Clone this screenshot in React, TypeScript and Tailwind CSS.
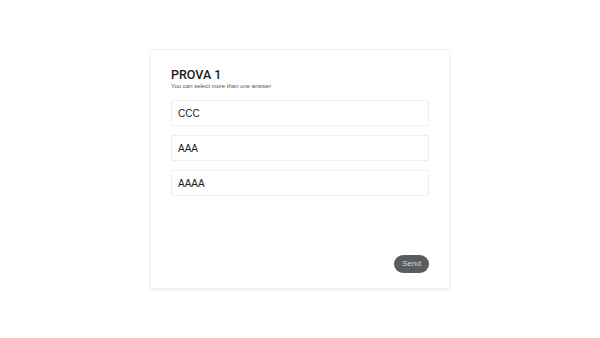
export default function App() {
  const options = ['CCC', 'AAA', 'AAAA'];
  return (
    <div className="flex h-[338px] w-full items-center justify-center bg-white font-['Liberation_Sans',Arial,sans-serif]">
      <div className="flex h-[240px] w-[300px] flex-col rounded-[3px] border border-[#f0f0f0] bg-white px-[20px] pb-[15px] pt-[17px] shadow-[0_1px_3px_rgba(0,0,0,0.08)]">
        <h1 className="font-['Roboto',sans-serif] text-[12.5px] font-medium leading-[15px] text-[#1a1a1a]">PROVA 1</h1>
        <p className="text-[6px] leading-[8px] text-[#555]">You can select more than one answer</p>
        <div className="mt-[10px] flex flex-col gap-[9px]">
          {options.map((o) => (
            <div
              key={o}
              className="flex h-[26px] items-center rounded-[2px] border border-[#efefef] px-[6px] text-[10px] text-[#222]"
            >
              {o}
            </div>
          ))}
        </div>
        <div className="mt-auto flex justify-end">
          <button className="h-[18px] w-[35px] rounded-full bg-[#5c5c5c] text-[8px] text-[#d8d8d8]">Send</button>
        </div>
      </div>
    </div>
  );
}
